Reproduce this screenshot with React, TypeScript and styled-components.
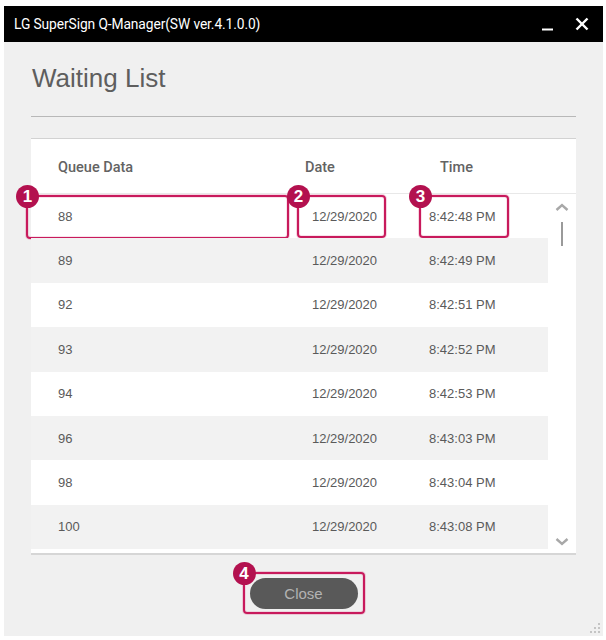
import React from "react";
import styled, { createGlobalStyle } from "styled-components";

const Global = createGlobalStyle`
  html, body { margin: 0; padding: 0; background: #ffffff; }
  * { box-sizing: border-box; }
`;

const Window = styled.div`
  position: relative;
  margin: 6px 0 0 4px;
  width: 599px;
  height: 630px;
  background: #f0f0f0;
  display: flex;
  flex-direction: column;
  font-family: "Liberation Sans", Arial, sans-serif;
`;

const TitleBar = styled.div`
  height: 36px;
  flex: none;
  background: #000;
  color: #fff;
  display: flex;
  align-items: center;
  justify-content: space-between;
  padding: 0 14px 0 10px;
`;

const TitleText = styled.span`
  font-family: Roboto, "Liberation Sans", sans-serif;
  font-size: 13.8px;
  letter-spacing: -0.1px;
`;

const Controls = styled.div`
  display: flex;
  align-items: center;
  gap: 21px;
`;

const Content = styled.div`
  flex: 1;
  display: flex;
  flex-direction: column;
  padding: 0 27px;
`;

const Heading = styled.h1`
  margin: 21px 0 0 1px;
  font-weight: 400;
  font-size: 26px;
  line-height: 30px;
  color: #5e5e5e;
`;

const Divider = styled.div`
  margin-top: 23px;
  height: 1px;
  background: #b8b8b8;
`;

const Panel = styled.div`
  margin-top: 21px;
  background: #fff;
  border-top: 1px solid #d2d2d2;
  border-bottom: 2px solid #d6d6d6;
  display: flex;
  flex-direction: column;
`;

const HeaderRow = styled.div`
  height: 55px;
  display: grid;
  grid-template-columns: 247px 135px 1fr;
  align-items: center;
  padding: 3px 0 0 27px;
  border-bottom: 1px solid #e8e8e8;
  font-family: Roboto, "Liberation Sans", sans-serif;
  font-weight: 500;
  font-size: 14.5px;
  color: #636363;
`;

const Body = styled.div`
  height: 359px;
  display: flex;
`;

const List = styled.div`
  width: 517px;
  display: flex;
  flex-direction: column;
`;

const Row = styled.div<{ $alt: boolean }>`
  position: relative;
  height: 44.4px;
  flex: none;
  display: grid;
  grid-template-columns: 254px 117px 1fr;
  align-items: center;
  padding-left: 27px;
  background: ${(p) => (p.$alt ? "#f2f2f2" : "#ffffff")};
  font-size: 13px;
  color: #5a5a5a;
`;

const ScrollColumn = styled.div`
  flex: 1;
  display: flex;
  flex-direction: column;
  align-items: center;
  padding: 9px 0 7px;
`;

const Thumb = styled.div`
  width: 2px;
  height: 24px;
  margin-top: 11px;
  background: #9a9a9a;
`;

const Spacer = styled.div`
  flex: 1;
`;

const Footer = styled.div`
  flex: 1;
  display: flex;
  justify-content: center;
  padding-top: 23px;
`;

const ButtonWrap = styled.div`
  position: relative;
  height: 31px;
`;

const CloseButton = styled.button`
  width: 108px;
  height: 31px;
  border: none;
  border-radius: 16px;
  background: #595959;
  color: #b3b3b3;
  font-family: "Liberation Sans", Arial, sans-serif;
  font-size: 15px;
  padding: 0;
`;

const Callout = styled.div<{ $l: number; $t: number; $w: number; $h: number }>`
  position: absolute;
  left: ${(p) => p.$l}px;
  top: ${(p) => p.$t}px;
  width: ${(p) => p.$w}px;
  height: ${(p) => p.$h}px;
  border: 2px solid #c81a5c;
  border-radius: 4px;
  box-shadow: 0 0 0 1px rgba(214, 60, 120, 0.22), inset 0 0 0 1px rgba(214, 60, 120, 0.15);
  pointer-events: none;
`;

const Badge = styled.div`
  position: absolute;
  left: -12px;
  top: -12px;
  width: 23px;
  height: 23px;
  border-radius: 50%;
  background: #b3114f;
  color: #fff;
  font-family: "Liberation Sans", Arial, sans-serif;
  font-weight: 700;
  font-size: 17px;
  line-height: 23px;
  text-align: center;
`;

const Grip = styled.svg`
  position: absolute;
  right: 2px;
  bottom: 2px;
`;

const rows = [
  ["88", "12/29/2020", "8:42:48 PM"],
  ["89", "12/29/2020", "8:42:49 PM"],
  ["92", "12/29/2020", "8:42:51 PM"],
  ["93", "12/29/2020", "8:42:52 PM"],
  ["94", "12/29/2020", "8:42:53 PM"],
  ["96", "12/29/2020", "8:43:03 PM"],
  ["98", "12/29/2020", "8:43:04 PM"],
  ["100", "12/29/2020", "8:43:08 PM"],
];

const Chevron = ({ up }: { up: boolean }) => (
  <svg width="14" height="8" viewBox="0 0 14 8">
    <polyline
      points={up ? "1.5,7 7,2 12.5,7" : "1.5,1 7,6 12.5,1"}
      fill="none"
      stroke="#a8a8a8"
      strokeWidth="2.4"
    />
  </svg>
);

export default function App() {
  return (
    <>
      <Global />
      <Window>
        <TitleBar>
          <TitleText>LG SuperSign Q-Manager(SW ver.4.1.0.0)</TitleText>
          <Controls>
            <svg width="13" height="14" viewBox="0 0 13 14">
              <line x1="1" y1="12.5" x2="12" y2="12.5" stroke="#fff" strokeWidth="2" />
            </svg>
            <svg width="14" height="14" viewBox="0 0 14 14">
              <line x1="1.5" y1="1.5" x2="12.5" y2="12.5" stroke="#fff" strokeWidth="2.4" />
              <line x1="12.5" y1="1.5" x2="1.5" y2="12.5" stroke="#fff" strokeWidth="2.4" />
            </svg>
          </Controls>
        </TitleBar>
        <Content>
          <Heading>Waiting List</Heading>
          <Divider />
          <Panel>
            <HeaderRow>
              <span>Queue Data</span>
              <span>Date</span>
              <span>Time</span>
            </HeaderRow>
            <Body>
              <List>
                {rows.map((r, i) => (
                  <Row key={r[0]} $alt={i % 2 === 1}>
                    <span>{r[0]}</span>
                    <span>{r[1]}</span>
                    <span>{r[2]}</span>
                    {i === 0 && (
                      <>
                        <Callout $l={-5} $t={1} $w={263} $h={44}>
                          <Badge>1</Badge>
                        </Callout>
                        <Callout $l={266} $t={1} $w={89} $h={43}>
                          <Badge>2</Badge>
                        </Callout>
                        <Callout $l={388} $t={1} $w={90} $h={43}>
                          <Badge>3</Badge>
                        </Callout>
                      </>
                    )}
                  </Row>
                ))}
              </List>
              <ScrollColumn>
                <Chevron up />
                <Thumb />
                <Spacer />
                <Chevron up={false} />
              </ScrollColumn>
            </Body>
          </Panel>
          <Footer>
            <ButtonWrap>
              <CloseButton>Close</CloseButton>
              <Callout $l={-7} $t={-6} $w={122} $h={42}>
                <Badge>4</Badge>
              </Callout>
            </ButtonWrap>
          </Footer>
        </Content>
        <Grip width="12" height="12" viewBox="0 0 12 12">
          {[
            [10, 2], [10, 6], [6, 6], [10, 10], [6, 10], [2, 10],
          ].map(([x, y]) => (
            <rect key={`${x}-${y}`} x={x - 1} y={y - 1} width="2" height="2" fill="#c4c4c4" />
          ))}
        </Grip>
      </Window>
    </>
  );
}
